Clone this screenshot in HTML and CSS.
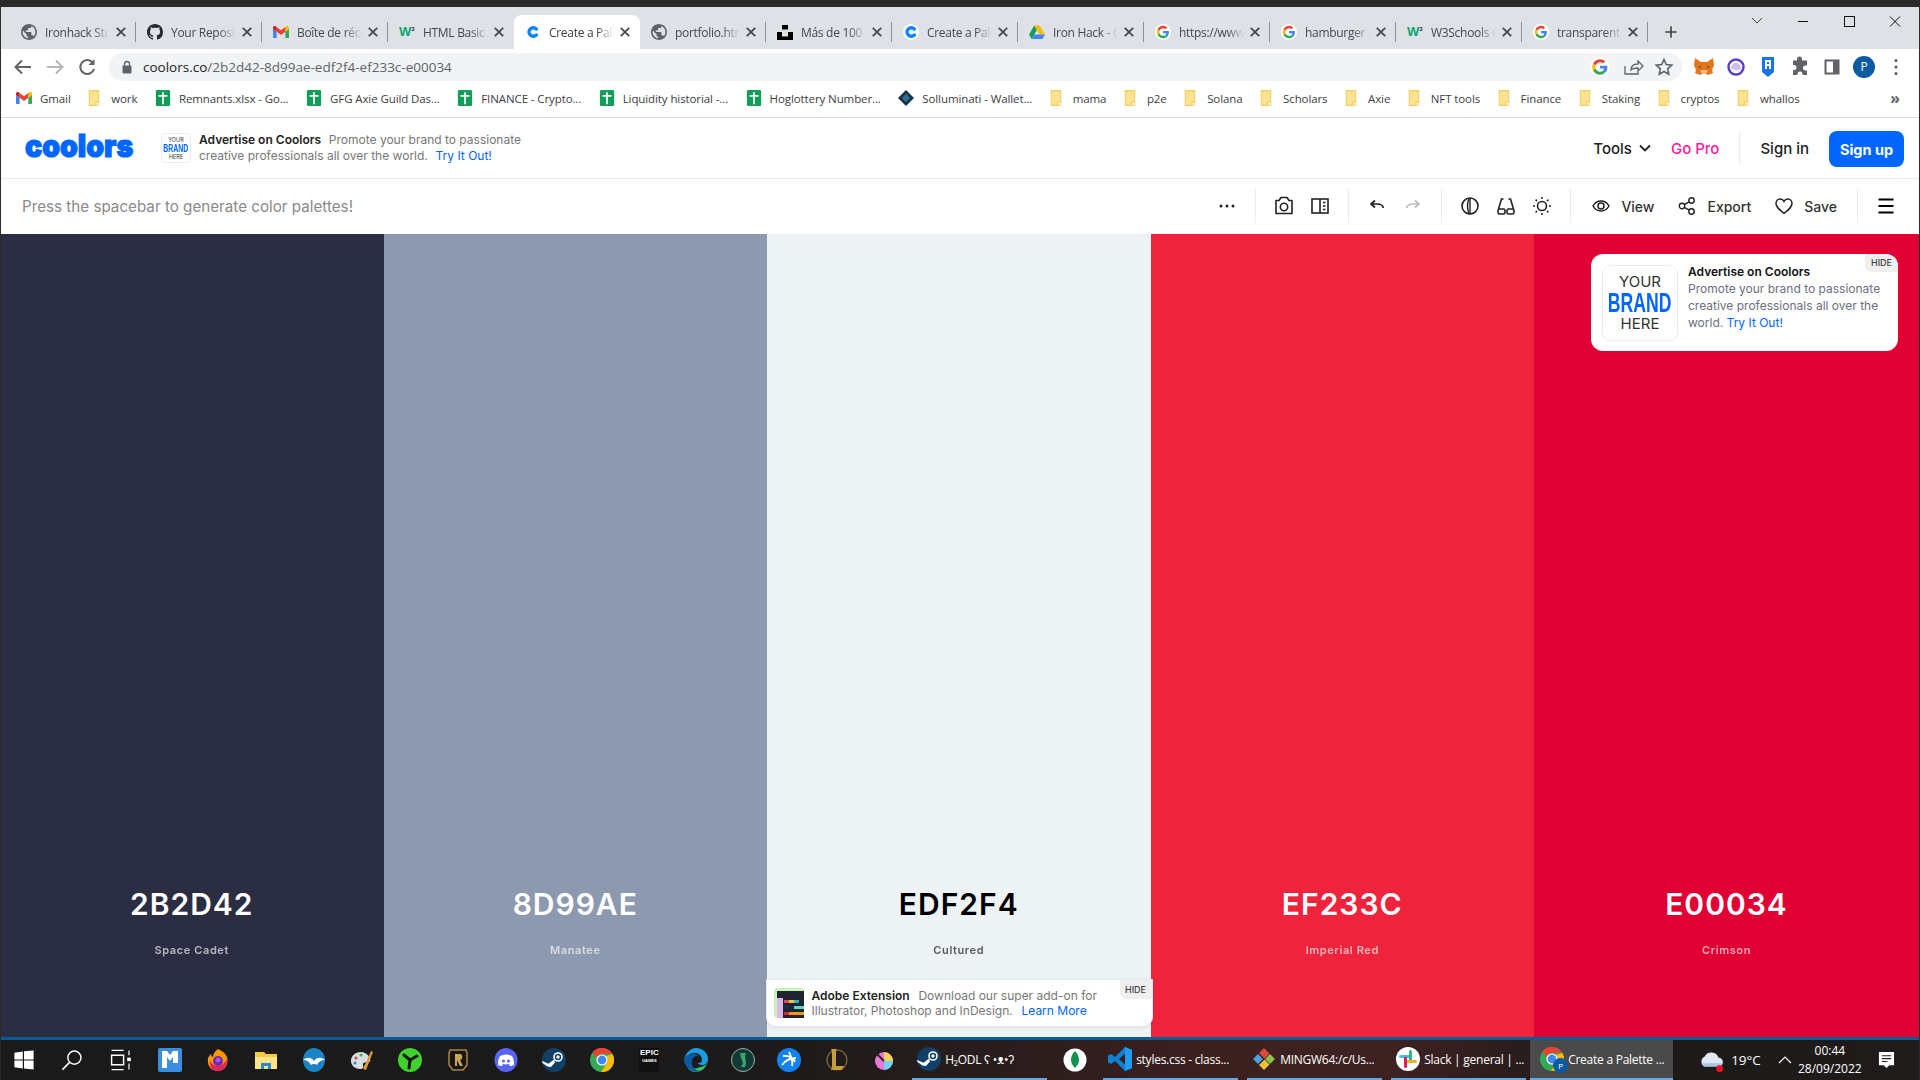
FILE: index.html
```html
<!DOCTYPE html>
<html lang="en">
<head>
<meta charset="utf-8">
<title>Create a Palette - Coolors</title>
<link rel="stylesheet" href="styles.css">
</head>
<body>
<svg class="defs" aria-hidden="true">
  <symbol id="globe" viewBox="2 2 20 20"><path fill="#5f6368" d="M12 2C6.48 2 2 6.48 2 12s4.48 10 10 10 10-4.48 10-10S17.52 2 12 2zm-1 17.93c-3.95-.49-7-3.85-7-7.93 0-.62.08-1.21.21-1.79L9 15v1c0 1.1.9 2 2 2v1.93zm6.9-2.54c-.26-.81-1-1.39-1.9-1.39h-1v-3c0-.55-.45-1-1-1H8v-2h2c.55 0 1-.45 1-1V7h2c1.1 0 2-.9 2-2v-.41c2.93 1.19 5 4.06 5 7.41 0 2.08-.8 3.97-2.1 5.39z"/></symbol>
  <symbol id="github" viewBox="0 0 16 16"><path fill="#24292f" d="M8 0C3.58 0 0 3.58 0 8c0 3.54 2.29 6.53 5.47 7.59.4.07.55-.17.55-.38 0-.19-.01-.82-.01-1.49-2.01.37-2.53-.49-2.69-.94-.09-.23-.48-.94-.82-1.13-.28-.15-.68-.52-.01-.53.63-.01 1.08.58 1.23.82.72 1.21 1.87.87 2.33.66.07-.52.28-.87.51-1.07-1.78-.2-3.64-.89-3.64-3.95 0-.87.31-1.59.82-2.15-.08-.2-.36-1.02.08-2.12 0 0 .67-.21 2.2.82.64-.18 1.32-.27 2-.27.68 0 1.36.09 2 .27 1.53-1.04 2.2-.82 2.2-.82.44 1.1.16 1.92.08 2.12.51.56.82 1.27.82 2.15 0 3.07-1.87 3.75-3.65 3.95.29.25.54.73.54 1.48 0 1.07-.01 1.93-.01 2.2 0 .21.15.46.55.38A8.013 8.013 0 0016 8c0-4.42-3.58-8-8-8z"/></symbol>
  <symbol id="gmail" viewBox="0 0 24 24"><path fill="#4285f4" d="M1.6 21h3.9v-9.3L0 7.6v11.8C0 20.3.7 21 1.6 21"/><path fill="#34a853" d="M18.5 21h3.9c.9 0 1.6-.7 1.6-1.6V7.6l-5.5 4.1"/><path fill="#fbbc04" d="M18.5 4.6v7.1L24 7.6V5.4c0-2-2.3-3.2-3.9-2"/><path fill="#ea4335" d="M5.5 11.7V4.6L12 9.5l6.5-4.9v7.1L12 16.6"/><path fill="#c5221f" d="M0 5.4v2.2l5.5 4.1V4.6L3.9 3.4C2.3 2.2 0 3.4 0 5.4"/></symbol>
  <symbol id="google" viewBox="-7 -7 62 62"><circle cx="24" cy="24" r="31" fill="#fff"/><path fill="#EA4335" d="M24 9.5c3.54 0 6.71 1.22 9.21 3.6l6.85-6.85C35.9 2.38 30.47 0 24 0 14.62 0 6.51 5.38 2.56 13.22l7.98 6.19C12.43 13.72 17.74 9.5 24 9.5z"/><path fill="#4285F4" d="M46.98 24.55c0-1.57-.15-3.09-.38-4.55H24v9.02h12.94c-.58 2.96-2.26 5.48-4.78 7.18l7.73 6c4.51-4.18 7.09-10.36 7.09-17.65z"/><path fill="#FBBC05" d="M10.53 28.59c-.48-1.45-.76-2.99-.76-4.59s.27-3.14.76-4.59l-7.98-6.19C.92 16.46 0 20.12 0 24c0 3.88.92 7.54 2.56 10.78l7.97-6.19z"/><path fill="#34A853" d="M24 48c6.48 0 11.93-2.13 15.89-5.81l-7.73-6c-2.15 1.45-4.92 2.3-8.16 2.3-6.26 0-11.57-4.22-13.47-9.91l-7.98 6.19C6.51 42.62 14.62 48 24 48z"/></symbol>
  <symbol id="ccoolors" viewBox="0 0 16 16"><circle cx="8" cy="8" r="8" fill="#fff"/><path fill="none" stroke="#0a84ff" stroke-width="3.4" stroke-linecap="round" d="M11.4 5A4.300 4.300 0 1 0 11.4 11"/></symbol>
  <symbol id="unsplash" viewBox="0 0 16 16"><path fill="#000" d="M5 1h6v4.5H5zM0 8h5v4.5h6V8h5v8H0z"/></symbol>
  <symbol id="drive" viewBox="0 0 16 16"><path fill="#0f9d58" d="M5.3 1.5 0 10.6l2.6 4.4 5.3-9.1z"/><path fill="#fbbc04" d="M5.3 1.5h5.4l5.3 9.1h-5.4z"/><path fill="#4285f4" d="M2.6 15h10.8l2.6-4.4H5.3z"/></symbol>
  <symbol id="sheet" viewBox="0 0 16 18"><rect width="16" height="18" rx="1.5" fill="#0f9d58"/><path fill="#fff" d="M7 2.500h2V16H7zM3 5.500h10v2H3z"/></symbol>
  <symbol id="folder" viewBox="0 0 12 18"><path d="M.7.7h10.6v12.6h-3v4H.7z" fill="#fde293" stroke="#f0cf5e" stroke-width="1.2"/><path d="M8.5 13.5h3v3.8h-3z" fill="#fff" stroke="#f0cf5e"/></symbol>
  <symbol id="sollu" viewBox="0 0 16 16"><path fill="#16324a" d="M8 0l8 8-8 8-8-8z"/><path fill="#2d6f8f" d="M8 3.5 12 8l-4 4.5L4 8z"/></symbol>
  <symbol id="x" viewBox="0 0 16 16"><path stroke="#45494e" stroke-width="1.8" fill="none" d="M3.8 3.8l8.4 8.4M12.2 3.8l-8.4 8.4"/></symbol>
  <symbol id="folderBig" viewBox="0 0 24 24"><path fill="#f6c945" d="M1 4h9l2 2h11v15H1z"/><path fill="#ffe48a" d="M1 9h22v12H1z"/><path fill="#2f88c7" d="M7 15h10v6h-3v-3h-4v3H7z"/></symbol>
  <symbol id="steam" viewBox="0 0 24 24"><circle cx="12" cy="12" r="12" fill="#123f66"/><circle cx="16" cy="9" r="4" fill="none" stroke="#fff" stroke-width="1.6"/><circle cx="16" cy="9" r="1.7" fill="#fff"/><path fill="#fff" d="M0 13l6.5 2.8L12 11.5l1 3-4 4.5-3.5-.6L.5 15z"/></symbol>
  <symbol id="chrome" viewBox="0 0 24 24"><circle cx="12" cy="12" r="12" fill="#34a853"/><path fill="#ea4335" d="M12 0a12 12 0 0 1 10.4 6H12a6 6 0 0 0-5.6 4L2.4 4.2A12 12 0 0 1 12 0z"/><path fill="#fbbc04" d="M22.4 6A12 12 0 0 1 11 24l5.2-8A6 6 0 0 0 16 8z"/><circle cx="12" cy="12" r="5.6" fill="#fff"/><circle cx="12" cy="12" r="4.4" fill="#4285f4"/></symbol>
</svg>

<div class="window">
  <div class="topstrip"></div>

  <div class="tabbar">
    <div class="tab"><svg class="fav"><use href="#globe"/></svg><span class="tab-label">Ironhack Student Portal</span><svg class="tab-x"><use href="#x"/></svg><i class="tab-sep"></i></div>
    <div class="tab"><svg class="fav"><use href="#github"/></svg><span class="tab-label">Your Repositories</span><svg class="tab-x"><use href="#x"/></svg><i class="tab-sep"></i></div>
    <div class="tab"><svg class="fav"><use href="#gmail"/></svg><span class="tab-label">Boîte de réception</span><svg class="tab-x"><use href="#x"/></svg><i class="tab-sep"></i></div>
    <div class="tab"><span class="w3">W<sup>3</sup></span><span class="tab-label">HTML Basic Examples</span><svg class="tab-x"><use href="#x"/></svg><i class="tab-sep tab-sep-off"></i></div>
    <div class="tab tab-active"><svg class="fav"><use href="#ccoolors"/></svg><span class="tab-label">Create a Palette</span><svg class="tab-x"><use href="#x"/></svg><i class="tab-sep tab-sep-off"></i></div>
    <div class="tab"><svg class="fav"><use href="#globe"/></svg><span class="tab-label">portfolio.html</span><svg class="tab-x"><use href="#x"/></svg><i class="tab-sep"></i></div>
    <div class="tab"><svg class="fav"><use href="#unsplash"/></svg><span class="tab-label">Más de 100 imágenes</span><svg class="tab-x"><use href="#x"/></svg><i class="tab-sep"></i></div>
    <div class="tab"><svg class="fav"><use href="#ccoolors"/></svg><span class="tab-label">Create a Palette</span><svg class="tab-x"><use href="#x"/></svg><i class="tab-sep"></i></div>
    <div class="tab"><svg class="fav"><use href="#drive"/></svg><span class="tab-label">Iron Hack - Google</span><svg class="tab-x"><use href="#x"/></svg><i class="tab-sep"></i></div>
    <div class="tab"><svg class="fav"><use href="#google"/></svg><span class="tab-label">https://www.google</span><svg class="tab-x"><use href="#x"/></svg><i class="tab-sep"></i></div>
    <div class="tab"><svg class="fav"><use href="#google"/></svg><span class="tab-label">hamburger icon</span><svg class="tab-x"><use href="#x"/></svg><i class="tab-sep"></i></div>
    <div class="tab"><span class="w3">W<sup>3</sup></span><span class="tab-label">W3Schools Online</span><svg class="tab-x"><use href="#x"/></svg><i class="tab-sep"></i></div>
    <div class="tab"><svg class="fav"><use href="#google"/></svg><span class="tab-label">transparent color</span><svg class="tab-x"><use href="#x"/></svg><i class="tab-sep"></i></div>
    <svg class="newtab" viewBox="0 0 16 16"><path stroke="#3c4043" stroke-width="1.8" d="M8 1.5v13M1.5 8h13"/></svg>
    <div class="winctl">
      <svg class="winbtn" viewBox="0 0 46 28"><path d="M18 11l5 5 5-5" fill="none" stroke="#444"/></svg>
      <svg class="winbtn" viewBox="0 0 46 28"><path d="M18 14.5h10" stroke="#111"/></svg>
      <svg class="winbtn" viewBox="0 0 46 28"><rect x="18.5" y="9.5" width="10" height="10" fill="none" stroke="#111"/></svg>
      <svg class="winbtn" viewBox="0 0 46 28"><path d="M18 9.5l10 10M28 9.5l-10 10" stroke="#111"/></svg>
    </div>
  </div>

  <div class="addressbar">
    <svg class="navbtn" viewBox="0 0 32 28"><path d="M24 14H9M15 7.5 8.5 14l6.5 6.5" fill="none" stroke="#5f6368" stroke-width="2"/></svg>
    <svg class="navbtn" viewBox="0 0 32 28"><path d="M8 14h15M17 7.5l6.5 6.5-6.5 6.5" fill="none" stroke="#b4b6b9" stroke-width="2"/></svg>
    <svg class="navbtn" viewBox="0 0 32 28"><path d="M22 10a7 7 0 1 0 1 6" fill="none" stroke="#5f6368" stroke-width="2"/><path d="M23.5 6v6h-6z" fill="#5f6368"/></svg>
    <div class="omnibox">
      <svg class="lock" viewBox="0 0 12 14"><rect x="1.5" y="5.5" width="9" height="8" rx="1" fill="#5f6368"/><path d="M3.5 6V4a2.5 2.5 0 0 1 5 0v2" fill="none" stroke="#5f6368" stroke-width="1.3"/></svg>
      <span class="url"><b class="url-host">coolors.co</b>/2b2d42-8d99ae-edf2f4-ef233c-e00034</span>
      <div class="omni-icons">
        <svg class="extbtn" viewBox="0 0 32 28"><use href="#google" x="6" y="4" width="20" height="20"/></svg>
        <svg class="extbtn" viewBox="0 0 32 28"><path d="M9 13v8h13v-5M15 17c0-4 3-6 7-6V8l5 5-5 5v-3c-3 0-5 0-7 2z" fill="none" stroke="#5f6368" stroke-width="1.3"/></svg>
        <svg class="extbtn" viewBox="0 0 32 28"><path d="M16 6.5l2.3 5 5.4.6-4 3.7 1.1 5.4-4.8-2.7-4.8 2.7 1.1-5.4-4-3.7 5.4-.6z" fill="none" stroke="#5f6368" stroke-width="1.6"/></svg>
      </div>
    </div>
    <div class="ext-icons">
      <svg class="extbtn" viewBox="0 0 32 28"><path fill="#e2761b" d="M7 5l6 4h6l6-4 1 7-2 5 1 3-5 2-2-1h-4l-2 1-5-2 1-3-2-5z"/><path fill="#f6b98a" d="M12 17h8l-2 4h-4z"/><path fill="#3b2a20" d="M11 13l2 1-2 1zM21 13l-2 1 2 1z"/></svg>
      <svg class="extbtn" viewBox="0 0 32 28"><circle cx="16" cy="14" r="7.5" fill="#fff" stroke="#5b3cc4" stroke-width="2.4"/><path d="M11 15a5 5 0 0 1 10 0c0 2-2 1.500-3 2s-2 1-3 0-4 0-4-2z" fill="#cbbff5"/></svg>
      <svg class="extbtn" viewBox="0 0 32 28"><path d="M10 4h12v15l-6 5-6-5z" fill="#1a73e8"/><path d="M13 7h6v9h-2v-3h-2v3h-2zM15 9v2h2V9z" fill="#fff"/></svg>
      <svg class="extbtn" viewBox="0 0 32 28"><path fill="#5f6368" d="M13 6a2.500 2.500 0 0 1 5 0v1.500h5v5h-1.500a2.500 2.500 0 0 0 0 5H23V22h-4.500v-1a2.500 2.500 0 0 0-5 0v1H9v-5h1a2.500 2.500 0 0 0 0-5H9V7.500h4z"/></svg>
      <svg class="extbtn" viewBox="0 0 32 28"><rect x="9.500" y="7.500" width="13" height="13" fill="none" stroke="#5f6368" stroke-width="2"/><rect x="17" y="8" width="5" height="12" fill="#5f6368"/></svg>
      <span class="avatar">P</span>
      <svg class="extbtn" viewBox="0 0 32 28"><path d="M16 7.500v.1M16 14v.1M16 20.500v.1" stroke="#5f6368" stroke-width="3.200" stroke-linecap="round"/></svg>
    </div>
  </div>

  <div class="bookmarks">
    <span class="bm"><svg class="bm-ico"><use href="#gmail"/></svg>Gmail</span>
    <span class="bm"><svg class="bm-fold"><use href="#folder"/></svg>work</span>
    <span class="bm"><svg class="bm-ico"><use href="#sheet"/></svg>Remnants.xlsx - Go...</span>
    <span class="bm"><svg class="bm-ico"><use href="#sheet"/></svg>GFG Axie Guild Das...</span>
    <span class="bm"><svg class="bm-ico"><use href="#sheet"/></svg>FINANCE - Crypto...</span>
    <span class="bm"><svg class="bm-ico"><use href="#sheet"/></svg>Liquidity historial -...</span>
    <span class="bm"><svg class="bm-ico"><use href="#sheet"/></svg>Hoglottery Number...</span>
    <span class="bm"><svg class="bm-ico"><use href="#sollu"/></svg>Solluminati - Wallet...</span>
    <span class="bm"><svg class="bm-fold"><use href="#folder"/></svg>mama</span>
    <span class="bm"><svg class="bm-fold"><use href="#folder"/></svg>p2e</span>
    <span class="bm"><svg class="bm-fold"><use href="#folder"/></svg>Solana</span>
    <span class="bm"><svg class="bm-fold"><use href="#folder"/></svg>Scholars</span>
    <span class="bm"><svg class="bm-fold"><use href="#folder"/></svg>Axie</span>
    <span class="bm"><svg class="bm-fold"><use href="#folder"/></svg>NFT tools</span>
    <span class="bm"><svg class="bm-fold"><use href="#folder"/></svg>Finance</span>
    <span class="bm"><svg class="bm-fold"><use href="#folder"/></svg>Staking</span>
    <span class="bm"><svg class="bm-fold"><use href="#folder"/></svg>cryptos</span>
    <span class="bm"><svg class="bm-fold"><use href="#folder"/></svg>whallos</span>
    <span class="bm-more">»</span>
  </div>

  <header class="site-header">
    <span class="logo">coolors</span>
    <div class="brandbox brandbox-sm"><span class="b-your">YOUR</span><span class="b-brand">BRAND</span><span class="b-here">HERE</span></div>
    <p class="head-ad"><b>Advertise on Coolors</b>&nbsp; Promote your brand to passionate<br>creative professionals all over the world.&nbsp; <a class="link">Try It Out!</a></p>
    <nav class="head-nav">
      <span class="nav-tools">Tools <svg class="chev" viewBox="0 0 12 8"><path d="M1 1.500l5 5 5-5" fill="none" stroke="#222" stroke-width="1.800"/></svg></span>
      <span class="nav-pro">Go Pro</span>
      <i class="head-sep"></i>
      <span class="nav-signin">Sign in</span>
      <span class="nav-signup">Sign up</span>
    </nav>
  </header>

  <div class="toolbar">
    <span class="hint">Press the spacebar to generate color palettes!</span>
    <div class="tools">
      <svg class="tool" viewBox="0 0 36 36"><circle cx="12" cy="18" r="1.500" fill="#222"/><circle cx="18" cy="18" r="1.500" fill="#222"/><circle cx="24" cy="18" r="1.500" fill="#222"/></svg>
      <i class="tool-sep"></i>
      <svg class="tool" viewBox="0 0 36 36"><path d="M10 12.500h3l2-3h6l2 3h3v13H10z" fill="none" stroke="#222" stroke-width="1.600" stroke-linejoin="round"/><circle cx="18" cy="19" r="3.700" fill="none" stroke="#222" stroke-width="1.600"/></svg>
      <svg class="tool" viewBox="0 0 36 36"><rect x="10" y="11" width="16" height="14" fill="none" stroke="#222" stroke-width="1.600"/><path d="M18 11v14" stroke="#222" stroke-width="1.600"/><path d="M21 14.500h2.500M21 18h2.500M21 21.500h2.500" stroke="#222" stroke-width="1.500"/></svg>
      <i class="tool-sep"></i>
      <svg class="tool" viewBox="0 0 36 36"><path d="M12.500 16h6c3 0 5 1 6 4M16 12.500 12 16l4 3.500" fill="none" stroke="#222" stroke-width="1.700"/></svg>
      <svg class="tool" viewBox="0 0 36 36"><path d="M23.500 16h-6c-3 0-5 1-6 4M20 12.500l4 3.500-4 3.500" fill="none" stroke="#bbb" stroke-width="1.700"/></svg>
      <i class="tool-sep"></i>
      <svg class="tool" viewBox="0 0 36 36"><circle cx="18" cy="18" r="8" fill="none" stroke="#222" stroke-width="1.600"/><path d="M18 10c-3 2-3.500 13 0 16" fill="none" stroke="#222" stroke-width="1.400"/><path d="M18 10v16" stroke="#222" stroke-width="1.400"/></svg>
      <svg class="tool" viewBox="0 0 36 36"><path d="M10.500 21l3-10h2M25.500 21l-3-10h-2" fill="none" stroke="#222" stroke-width="1.600"/><rect x="10" y="21" width="7" height="5" rx="1.500" fill="none" stroke="#222" stroke-width="1.600"/><rect x="19" y="21" width="7" height="5" rx="1.500" fill="none" stroke="#222" stroke-width="1.600"/></svg>
      <svg class="tool" viewBox="0 0 36 36"><circle cx="18" cy="18" r="4.500" fill="none" stroke="#222" stroke-width="1.600"/><path d="M18 9v2M18 25v2M9 18h2M25 18h2M11.600 11.600l1.400 1.400M23 23l1.400 1.400M24.400 11.600 23 13M13 23l-1.400 1.400" stroke="#222" stroke-width="1.500"/></svg>
      <i class="tool-sep tool-sep-wide"></i>
      <span class="tool-txt"><svg class="tool-ico" viewBox="0 0 18 18"><path d="M1 9c2-3.500 5-5 8-5s6 1.500 8 5c-2 3.500-5 5-8 5S3 12.500 1 9z" fill="none" stroke="#222" stroke-width="1.500"/><circle cx="9" cy="9" r="3" fill="none" stroke="#222" stroke-width="1.500"/></svg>View</span>
      <span class="tool-txt"><svg class="tool-ico" viewBox="0 0 18 18"><circle cx="4" cy="9" r="2.700" fill="none" stroke="#222" stroke-width="1.400"/><circle cx="13.500" cy="3.500" r="2.700" fill="none" stroke="#222" stroke-width="1.400"/><circle cx="13.500" cy="14.500" r="2.700" fill="none" stroke="#222" stroke-width="1.400"/><path d="M6.300 7.700l4.900-2.900M6.300 10.300l4.900 2.900" stroke="#222" stroke-width="1.400"/></svg>Export</span>
      <span class="tool-txt tool-txt-last"><svg class="tool-ico" viewBox="0 0 18 18"><path d="M9 16.500C4 12.500 1 10 1 6.500 1 4 3 2 5.200 2 6.800 2 8.200 2.800 9 4.300 9.800 2.800 11.200 2 12.800 2 15 2 17 4 17 6.500c0 3.500-3 6-8 10z" fill="none" stroke="#222" stroke-width="1.500"/></svg>Save</span>
      <i class="tool-sep"></i>
      <svg class="tool" viewBox="0 0 36 36"><path d="M10.500 11.500h15M10.500 18h15M10.500 24.500h15" stroke="#000" stroke-width="2.200"/></svg>
    </div>
  </div>

  <main class="palette">
    <section class="swatch sw-1"><h2 class="hex">2B2D42</h2><p class="name">Space Cadet</p></section>
    <section class="swatch sw-2"><h2 class="hex">8D99AE</h2><p class="name">Manatee</p></section>
    <section class="swatch sw-3"><h2 class="hex">EDF2F4</h2><p class="name">Cultured</p></section>
    <section class="swatch sw-4"><h2 class="hex">EF233C</h2><p class="name">Imperial Red</p></section>
    <section class="swatch sw-5"><h2 class="hex">E00034</h2><p class="name">Crimson</p></section>

    <aside class="ad-card">
      <span class="hide hide-lg">HIDE</span>
      <div class="brandbox brandbox-lg"><span class="b-your">YOUR</span><span class="b-brand">BRAND</span><span class="b-here">HERE</span></div>
      <p class="ad-text"><b>Advertise on Coolors</b><br>Promote your brand to passionate creative professionals all over the world.&nbsp;<a class="link">Try It Out!</a></p>
    </aside>

    <aside class="ad-bar">
      <span class="hide hide-sm">HIDE</span>
      <svg class="adobe" viewBox="0 0 30 30"><rect width="30" height="30" rx="3" fill="#c9f2b8"/><rect x="3" y="3" width="27" height="27" fill="#1f2430"/><rect x="3" y="10" width="6" height="20" fill="#d9b8e8"/><path d="M10 12h5v3h-5z" fill="#e94560"/><path d="M15 12h5v3h-5z" fill="#f5c242"/><path d="M20 12h5v3h-5z" fill="#2bb6c8"/><path d="M10 18h5v3h-5z" fill="#1c2b4a"/><path d="M20 18h10v3H20z" fill="#5dd8c8"/><path d="M10 24h5v3h-5z" fill="#d62839"/><path d="M15 24h15v3H15z" fill="#f7941d"/></svg>
      <p class="bar-text"><b>Adobe Extension</b>&nbsp; Download our super add-on for<br>Illustrator, Photoshop and InDesign.&nbsp; <a class="link">Learn More</a></p>
    </aside>
  </main>

  <div class="bluelip"></div>
  <footer class="taskbar">
    <span class="tb"><svg class="tbi" viewBox="0 0 20 20"><path fill="#fff" d="M2 4l7-1v6.500H2zM10 2.800L18 2v7.500h-8zM2 10.500h7V17l-7-1zM10 10.500h8V18l-8-1z"/></svg></span>
    <span class="tb"><svg class="tbi" viewBox="0 0 20 20"><circle cx="12" cy="8" r="5.500" fill="none" stroke="#fff" stroke-width="1.200"/><path d="M8 12l-6 6" stroke="#fff" stroke-width="1.400"/></svg></span>
    <span class="tb"><svg class="tbi" viewBox="0 0 20 20"><path d="M3 2h10M3 18h10M3 6h10v8H3z" fill="none" stroke="#fff" stroke-width="1.200"/><rect x="16" y="8" width="3" height="3" fill="#fff"/><path d="M17.500 2v4M17.500 13v5" stroke="#fff"/></svg></span>
    <span class="tb tb-shift"><svg class="tbi" viewBox="0 0 24 24"><rect width="24" height="24" rx="2" fill="#3b8de0"/><path fill="#fff" d="M4 3h5l3 4 3-4h5v12h-5V9l-3 4-3-4v11H4z"/></svg></span>
    <span class="tb"><svg class="tbi" viewBox="0 0 24 24"><path fill="#ff9500" d="M12 1c2 1 7 3 9 8 2 7-2 14-9 14S1 18 2 10c1-2 2-3 3-4 0 2 1 3 2 3 0-3 2-6 5-8z"/><path fill="#e3215f" d="M12 23C6 23 3 18 4 13c3 6 11 7 15 1 1-1 2-2 2-4 1 7-3 13-9 13z"/><circle cx="12" cy="13" r="5" fill="#6b2bb0"/><circle cx="12" cy="12" r="2.500" fill="#b74cd6"/></svg></span>
    <span class="tb"><svg class="tbi"><use href="#folderBig"/></svg></span>
    <span class="tb"><svg class="tbi" viewBox="0 0 24 24"><ellipse cx="12" cy="12" rx="11" ry="12" fill="#1b83c6"/><path fill="#fff" d="M1 12c4-3 8-3 11 1 3-4 7-4 11-1-3 0-6 1-8 5-1-1-2-1-3-1s-2 0-3 1c-2-4-5-5-8-5z"/></svg></span>
    <span class="tb"><svg class="tbi" viewBox="0 0 24 24"><path fill="#d8dde2" d="M11 4c-6 0-10 4-10 9s5 8 9 8c3 0 4-2 3-4s2-3 5-3c2 0 3-1 2-3-1-4-5-7-9-7z"/><circle cx="6" cy="10" r="1.500" fill="#d9433a"/><circle cx="11" cy="7" r="1.500" fill="#3bb54a"/><circle cx="5" cy="15" r="1.500" fill="#2f88c7"/><path d="M13 21 21 3l2 1-7 18z" fill="#e09a3e"/></svg></span>
    <span class="tb"><svg class="tbi" viewBox="0 0 24 24"><circle cx="12" cy="12" r="12" fill="#41d12e"/><path d="M12 12L6 7M12 12l7-4M12 12l-1 8" stroke="#141414" stroke-width="3" stroke-linecap="round"/></svg></span>
    <span class="tb"><svg class="tbi" viewBox="0 0 24 24"><path d="M4 2h16l1 3v12l-4 5H7l-4-5V5z" fill="#1a1712" stroke="#a98647" stroke-width="1.500"/><path d="M9 6h5c3 0 3 6 0 6l3 6h-3l-3-6v6H9z" fill="#c9a55c"/></svg></span>
    <span class="tb"><svg class="tbi" viewBox="0 0 24 24"><ellipse cx="12" cy="12" rx="11.500" ry="12" fill="#5865f2"/><path fill="#fff" d="M6 8c4-2 8-2 12 0 2 3 2 6 2 9-2 1-3 1-4 1l-1-2c-2 .5-4 .5-6 0l-1 2c-1 0-2 0-4-1 0-3 0-6 2-9z"/><circle cx="9.500" cy="13" r="1.600" fill="#5865f2"/><circle cx="14.500" cy="13" r="1.600" fill="#5865f2"/></svg></span>
    <span class="tb"><svg class="tbi"><use href="#steam"/></svg></span>
    <span class="tb"><svg class="tbi"><use href="#chrome"/></svg></span>
    <span class="tb tb-tight"><span class="epic">EPIC<small>GAMES</small></span></span>
    <span class="tb tb-tight"><svg class="tbi" viewBox="0 0 24 24"><path fill="#1b9de2" d="M12 0c7 0 12 5 12 11 0 4-3 6-6 6-2 0-4-1-4-2 3 0 4-1 4-3 0-4-3-7-7-7-5 0-9 3-11 6C2 5 6 0 12 0z"/><path fill="#36c26b" d="M24 11c0 7-6 13-12 13-4 0-7-2-9-5 3 2 9 2 13 0 3 0 8-2 8-8z"/><path fill="#0c59a4" d="M0 11c2-4 6-5 9-5 4 0 6 2 6 2-4-1-8 3-7 8 1 4 4 7 9 7-5 2-10 0-14-4-2-2-3-5-3-8z"/></svg></span>
    <span class="tb tb-tight"><svg class="tbi" viewBox="0 0 24 24"><circle cx="12" cy="12" r="11.500" fill="#0f3a38" stroke="#9fb0a8"/><path fill="#3aa66d" d="M9 5h6l-1 3 1 7-1 4h-4l2-4-2-5z"/></svg></span>
    <span class="tb tb-tight"><svg class="tbi" viewBox="0 0 24 24"><circle cx="12" cy="12" r="12" fill="#1482f0"/><path d="M12 4c2 4 4 10 3 14M6 8c5-1 10 2 12 6M5 17c3-4 8-7 14-7" fill="none" stroke="#fff" stroke-width="1.800"/></svg></span>
    <span class="tb tb-tight"><svg class="tbi" viewBox="0 0 24 24"><circle cx="13" cy="12" r="10" fill="none" stroke="#8a6d2f" stroke-width="1.200"/><path d="M7 1h6l-1 2v15h8l-2 4H7l1-3V4z" fill="#c89b3c"/></svg></span>
    <span class="tb tb-tight"><svg class="tbi" viewBox="0 0 24 24"><circle cx="13" cy="13" r="9" fill="#e879d6"/><path d="M13 4a9 9 0 0 1 9 9h-9z" fill="#ffd15c"/><path d="M22 13a9 9 0 0 1-9 9v-9z" fill="#6fd3f5"/><path d="M1 1l12 12" stroke="#222" stroke-width="1.800"/></svg></span>
    <span class="tb-task tb-active tb-steam"><svg class="tbi"><use href="#steam"/></svg><span class="tb-label">H₂ODL ʕ •ᴥ•ʔ</span></span>
    <span class="tb tb-mongo"><svg class="tbi" viewBox="0 0 24 24"><circle cx="12" cy="12" r="11.500" fill="#fff"/><path fill="#12924f" d="M12 3c3 3 4 6 4 9s-2 6-4 8c-2-2-4-5-4-8s1-6 4-9z"/></svg></span>
    <span class="tb-task tb-active"><svg class="tbi" viewBox="0 0 24 24"><path fill="#0e7fd1" d="M17 0l7 3v18l-7 3L7 14l-4 3-3-1.500V8.500L3 7l4 3zM17 6.500 11 12l6 5.500z"/><path fill="#1f9cf0" d="M17 0l7 3v18l-7 3z"/></svg><span class="tb-label">styles.css - class...</span></span>
    <span class="tb-task tb-active tb-git"><svg class="tbi" viewBox="0 0 24 24"><path fill="#e0483e" d="M12 1l5.500 5.500-5 5L7 6z"/><path fill="#4aa3df" d="M6 7l5 5-5 5-5-5z"/><path fill="#e9c13d" d="M12.500 12.500l5 5L12 23l-5-5z"/><path fill="#8bc34a" d="M18 7l5 5-5 5-5-5z"/></svg><span class="tb-label">MINGW64:/c/Us...</span></span>
    <span class="tb-task tb-active tb-git"><svg class="tbi" viewBox="0 0 24 24"><circle cx="12" cy="12" r="12" fill="#fff"/><path d="M4.500 9.500h8.500" fill="none" stroke="#36c5f0" stroke-width="3" stroke-linecap="round"/><path d="M14.500 4.500V13" fill="none" stroke="#2eb67d" stroke-width="3" stroke-linecap="round"/><path d="M11 14.500h8.500" fill="none" stroke="#ecb22e" stroke-width="3" stroke-linecap="round"/><path d="M9.500 11v8.500" fill="none" stroke="#e01e5a" stroke-width="3" stroke-linecap="round"/></svg><span class="tb-label">Slack | general | ...</span></span>
    <span class="tb-task tb-active tb-current"><span class="chrome-wrap"><svg class="tbi"><use href="#chrome"/></svg><span class="chrome-p">P</span></span><span class="tb-label">Create a Palette ...</span></span>
    <div class="tray">
      <span class="weather"><svg class="cloud" viewBox="0 0 24 24"><path fill="#dfe9f5" d="M6 18a5 5 0 0 1 0-9 7 7 0 0 1 13 1 4 4 0 0 1 0 8z"/><path fill="#a9c3e2" d="M4 15h18c0 2-1 3-3 3H6c-1 0-2-1-2-3z"/><circle cx="20" cy="20" r="3.200" fill="#e81123"/></svg>19°C</span>
      <svg class="caret" viewBox="0 0 14 8"><path d="M1 7l6-6 6 6" fill="none" stroke="#fff" stroke-width="1.100"/></svg>
      <span class="clock">00:44<br>28/09/2022</span>
      <svg class="notif" viewBox="0 0 18 20"><path fill="#fff" d="M1 1h16v14h-5l-3 3-3-3H1z"/><path d="M4 5h10M4 8h10M4 11h6" stroke="#222" stroke-width="1.100"/></svg>
    </div>
  </footer>
</div>
</body>
</html>
```

FILE: styles.css
```css
* { box-sizing: border-box; }
html, body { margin: 0; padding: 0; height: 100%; overflow: hidden; }
body { background: #222; font-family: "Inter", "Liberation Sans", sans-serif; }
.defs { width: 0; height: 0; overflow: hidden; display: block; position: absolute; }
p, h2 { margin: 0; }

.window {
  width: 1920px; height: 1080px;
  display: flex; flex-direction: column;
  border-left: 1px solid #2b2b2b; border-right: 1px solid #2b2b2b;
  overflow: hidden;
}
.topstrip { height: 7px; background: #2b2b2b; flex: none; }

/* Tabs */
.tabbar {
  height: 42px; flex: none;
  background: #dee1e6;
  display: flex; align-items: flex-end;
  padding: 0 1px 0 9px;
  font-family: "Open Sans", "Liberation Sans", sans-serif;
  font-size: 12px;
}
.tab {
  width: 126px; height: 34px; flex: none;
  display: flex; align-items: center;
  padding-left: 11px;
  color: #45494e;
}
.tab-active { background: #fff; border-radius: 8px 8px 0 0; color: #3c4043; }
.fav { width: 16px; height: 16px; flex: none; margin-right: 8px; }
.w3 {
  width: 16px; margin-right: 8px; flex: none;
  color: #04aa6d; font: bold 13px "Liberation Sans", sans-serif; line-height: 16px;
  white-space: nowrap; letter-spacing: -1px;
}
.w3 sup { font-size: 6px; line-height: 0; margin-left: 1px; color: #333; }
.tab-label {
  width: 68px; flex: none;
  overflow: hidden; white-space: nowrap;
  letter-spacing: -.3px;
  -webkit-mask-image: linear-gradient(90deg, #000 70%, transparent 96%);
  mask-image: linear-gradient(90deg, #000 70%, transparent 96%);
}
.tab-x { width: 16px; height: 16px; flex: none; }
.tab-sep { width: 1px; height: 20px; background: #8e9196; margin-left: 6px; flex: none; }
.tab-sep-off { background: transparent; }
.newtab { width: 14px; height: 14px; margin: 0 0 10px 16px; flex: none; }
.winctl { margin-left: auto; align-self: flex-start; display: flex; }
.winbtn { width: 46px; height: 28px; display: block; }

/* Address bar */
.addressbar {
  height: 32px; flex: none; background: #fff;
  display: flex; align-items: flex-start;
  padding: 4px 0 0 6px;
}
.navbtn { width: 32px; height: 28px; flex: none; }
.omnibox {
  margin-left: 6px; flex: 1; height: 28px;
  background: #f1f3f4; border-radius: 14px;
  display: flex; align-items: center; padding-left: 12px; padding-right: 2px;
}
.lock { width: 12px; height: 14px; flex: none; }
.url {
  margin-left: 10px; color: #5f6368;
  font-family: "Open Sans", "Liberation Sans", sans-serif; font-size: 13.5px;
}
.url-host { font-weight: 400; color: #202124; }
.omni-icons { margin-left: auto; display: flex; }
.extbtn { width: 32px; height: 28px; flex: none; display: block; }
.ext-icons { display: flex; margin-left: 6px; padding-right: 7px; align-items: center; }
.avatar {
  width: 22px; height: 22px; margin: 0 5px; border-radius: 50%;
  background: #0b5aa2; color: #fff; flex: none;
  font: 12px/22px "Open Sans", sans-serif; text-align: center;
}

/* Bookmarks */
.bookmarks {
  height: 37px; flex: none; background: #fff;
  border-bottom: 1px solid #dadce0;
  display: flex; align-items: center;
  padding: 0 19px 2px 15px;
  gap: 17.5px;
  font-family: "Open Sans", "Liberation Sans", sans-serif; font-size: 11.5px; letter-spacing: -.1px; color: #3c4043;
}
.bm { display: flex; align-items: center; white-space: nowrap; }
.bm-ico { width: 16px; height: 16px; margin-right: 8px; flex: none; }
.bm-fold { width: 12px; height: 16px; margin-right: 11px; flex: none; }
.bm-more { margin-left: auto; font-size: 16px; font-weight: 700; color: #5f6368; line-height: 1; }

/* Site header */
.site-header {
  height: 61px; flex: none; background: #fff;
  border-bottom: 1px solid #ebebeb;
  display: flex; align-items: center;
  padding: 0 15px 0 24px;
}
.logo {
  width: 112px; flex: none;
  color: #0066ff;
  font-family: "Inter", sans-serif; font-weight: 900; font-size: 31px; line-height: 40px;
  -webkit-text-stroke: 1.2px #0066ff;
  transform-origin: left center; transform: translateY(-2px) scaleX(0.92);
  white-space: nowrap;
}
.brandbox {
  display: flex; flex-direction: column; align-items: center; justify-content: center; flex: none;
  background: #fff; border: 1px solid #ececec;
  font-family: "Inter", "Liberation Sans", sans-serif; color: #333;
  overflow: hidden;
}
.b-brand {
  font-family: "Liberation Sans", sans-serif; font-weight: 700; color: #0066ff;
  transform: scaleX(0.63); white-space: nowrap;
}
.brandbox-sm { width: 30px; height: 30px; margin-left: 24px; border-radius: 4px; }
.brandbox-sm .b-your, .brandbox-sm .b-here { font-size: 5.5px; line-height: 6px; }
.brandbox-sm .b-brand { font-size: 11px; line-height: 11px; }
.brandbox-lg { width: 76px; height: 76px; border-radius: 8px; }
.brandbox-lg .b-your, .brandbox-lg .b-here { font-size: 15px; line-height: 16px; }
.brandbox-lg .b-brand { font-size: 28px; line-height: 26px; }

.head-ad {
  margin-left: 8px; font-size: 12px; line-height: 16px; color: #777;
  white-space: nowrap;
}
.head-ad b { font-weight: 600; color: #222; margin-right: 1px; }
.head-ad .link { margin-left: 1px; }
.link { color: #0066ff; }
.head-nav { margin-left: auto; display: flex; align-items: center; font-size: 15px; font-weight: 500; color: #222; }
.nav-tools { display: flex; align-items: center; gap: 7px; }
.chev { width: 12px; height: 8px; }
.nav-pro { margin-left: 20px; color: #ff1a9c; }
.head-sep { width: 1px; height: 36px; background: #ececec; margin: 0 20px; }
.nav-signup {
  margin: 2px 0 0 20px; width: 75px; height: 36px; border-radius: 8px;
  background: #0066ff; color: #fff; font-weight: 700; font-size: 14.5px;
  display: flex; align-items: center; justify-content: center;
}

/* Toolbar */
.toolbar {
  height: 55px; flex: none; background: #fff;
  display: flex; align-items: center;
  padding: 0 15px 1px 21px;
}
.hint { font-size: 15.2px; color: #8a8a8a; }
.tools { margin-left: auto; display: flex; align-items: center; }
.tool { width: 36px; height: 36px; flex: none; }
.tool-sep { width: 1px; height: 34px; background: #ececec; margin: 0 10px; flex: none; }
.tool-sep-wide { margin-right: 21px; }
.tool-txt { display: flex; align-items: center; gap: 11px; font-size: 14px; font-weight: 500; color: #333; margin-right: 24px; }
.tool-txt-last { margin-right: 20px; }
.tool-txt + .tool-sep { margin-left: 0; }
.tool-ico { width: 18px; height: 18px; flex: none; }

/* Palette */
.palette { flex: 1; display: flex; position: relative; min-height: 0; margin-left: -1px; }
.swatch {
  flex: 0 0 383.5px; display: flex; flex-direction: column; align-items: center; justify-content: flex-end;
  padding-bottom: 80px;
  text-align: center;
}
.sw-1 { background: #2b2d42; color: #fff; }
.sw-2 { background: #8d99ae; color: #fff; }
.sw-3 { background: #edf2f4; color: #000; }
.sw-4 { background: #ef233c; color: #fff; }
.sw-5 { background: #e00034; color: #fff; flex: 1; }
.hex { font-size: 30px; line-height: 36px; font-weight: 600; letter-spacing: 1px; }
.name { margin-top: 21px; font-size: 11px; line-height: 14px; font-weight: 600; letter-spacing: .6px; opacity: .65; }

.ad-card {
  position: absolute; top: 20px; right: 21px;
  width: 307px; height: 97px; border-radius: 12px; background: #fff;
  display: flex; align-items: center; padding-left: 11px;
  overflow: hidden;
}
.ad-text { align-self: flex-start; margin: 9px 0 0 10px; width: 200px; font-size: 12px; line-height: 17px; color: #6b6f80; }
.ad-text b { font-weight: 600; color: #111; }
.hide {
  position: absolute; top: 0; right: 0; background: #efefef; color: #444;
  font-size: 9px; font-weight: 500; text-align: center;
  border-radius: 0 0 0 7px;
}
.hide-lg { width: 33px; height: 18px; line-height: 18px; }
.hide-sm { width: 32px; height: 19px; line-height: 19px; }

.ad-bar {
  position: absolute; left: 50%; bottom: 10px; margin-left: -194px;
  width: 387px; height: 48px;
  background: #fff; border-radius: 0 0 10px 10px; border: 1px solid #e6e9ec;
  box-shadow: 0 1px 3px rgba(0,0,0,.08);
  display: flex; align-items: center; padding-left: 7px;
  overflow: hidden;
}
.adobe { width: 30px; height: 30px; flex: none; }
.bar-text { margin-left: 8px; font-size: 12px; line-height: 15px; color: #777; white-space: nowrap; }
.bar-text b { font-weight: 600; color: #222; margin-right: 2px; }
.bar-text .link { margin-left: 2px; }

/* Taskbar */
.bluelip { height: 3px; flex: none; background: #0b5c93; margin-left: -1px; }
.taskbar {
  height: 40px; flex: none;
  margin-left: -1px;
  display: flex; align-items: stretch;
  background: linear-gradient(90deg, #1a1a1a 0, #1c1a1a 40%, #2a1d1d 52%, #3b2020 62%, #3e2222 72%, #231b1b 82%, #1d1a1a 90%, #201b1b 100%);
  font-family: "Open Sans", "Liberation Sans", "DejaVu Sans", sans-serif;
  font-size: 12px; color: #fff;
}
.tb { width: 48px; flex: none; display: flex; align-items: center; justify-content: center; }
.tb-shift { margin-left: 2px; }
.tb-tight { width: 46.7px; }
.tbi { width: 24px; height: 24px; flex: none; display: block; }
.epic {
  width: 20px; height: 24px; background: #111; color: #fff;
  font: bold 8px/10px "Liberation Sans", sans-serif; text-align: center;
  display: flex; flex-direction: column; align-items: center;
}
.epic small { font-size: 4px; line-height: 6px; }
.tb-task {
  width: 135px; flex: none; display: flex; align-items: center; gap: 4px;
  padding-left: 5px;
  border-bottom: 2px solid transparent; white-space: nowrap;
  letter-spacing: -.25px;
}
.tb-active { border-bottom-color: #62a9e2; }
.tb-steam { margin-left: 6px; }
.tb-git { margin-left: 9px; }
.tb-mongo { margin: 0 4px; }
.tb-current { width: 143px; margin-left: 4px; padding-left: 10px; background: #4a4a4a; border-bottom-color: #62a9e2; }
.tb-label { overflow: hidden; }
.chrome-wrap { position: relative; width: 24px; height: 24px; flex: none; }
.chrome-p {
  position: absolute; right: -4px; bottom: -2px;
  width: 15px; height: 15px; border-radius: 50%;
  background: #0b5aa2; color: #fff; font-size: 8px; line-height: 15px; text-align: center; letter-spacing: 0;
}
.tray { display: flex; align-items: center; flex: 1; }
.weather { display: flex; align-items: center; gap: 7px; margin-left: 25px; font-size: 13.5px; }
.cloud { width: 26px; height: 26px; }
.caret { width: 14px; height: 8px; margin-left: 17px; flex: none; }
.clock { width: 70px; margin-left: 3px; text-align: center; line-height: 18px; font-size: 12px; flex: none; }
.notif { width: 17px; height: 19px; margin-left: 13.5px; flex: none; }
```
